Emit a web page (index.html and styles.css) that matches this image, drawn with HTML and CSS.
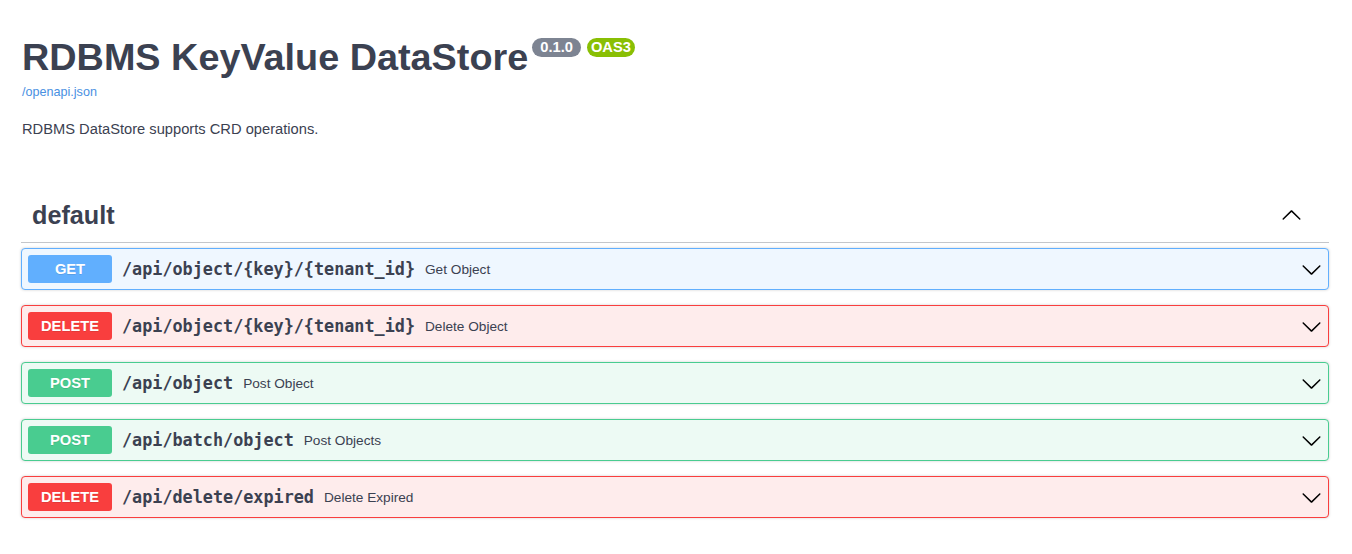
FILE: index.html
```html
<!DOCTYPE html>
<html lang="en">
<head>
<meta charset="utf-8">
<title>RDBMS KeyValue DataStore</title>
<link rel="stylesheet" href="styles.css">
</head>
<body>
<div class="wrapper">
  <div class="info">
    <h2 class="title">
      <span class="title-text">RDBMS KeyValue DataStore</span>
      <span class="badges">
        <span class="badge badge-version">0.1.0</span>
        <span class="badge badge-oas">OAS3</span>
      </span>
    </h2>
    <a class="spec-link" href="#">/openapi.json</a>
    <p class="description">RDBMS DataStore supports CRD operations.</p>
  </div>

  <div class="tag-section">
    <h3 class="tag">
      <span class="tag-name">default</span>
      <svg class="arrow arrow-up" viewBox="0 0 20 20" width="21" height="21" aria-hidden="true"><path d="M17.418 6.109c.272-.268.709-.268.979 0s.271.701 0 .969l-7.908 7.83c-.27.268-.707.268-.979 0l-7.908-7.83c-.27-.268-.27-.701 0-.969.271-.268.709-.268.979 0L10 13.25l7.418-7.141z" transform="rotate(180 10 10)"/></svg>
    </h3>

    <div class="opblock op-get">
      <span class="method">GET</span>
      <span class="path">/api/object/{key}/{tenant_id}</span>
      <span class="summary">Get Object</span>
      <svg class="arrow" viewBox="0 0 20 20" width="21" height="21" aria-hidden="true"><path d="M17.418 6.109c.272-.268.709-.268.979 0s.271.701 0 .969l-7.908 7.83c-.27.268-.707.268-.979 0l-7.908-7.83c-.27-.268-.27-.701 0-.969.271-.268.709-.268.979 0L10 13.25l7.418-7.141z"/></svg>
    </div>

    <div class="opblock op-delete">
      <span class="method">DELETE</span>
      <span class="path">/api/object/{key}/{tenant_id}</span>
      <span class="summary">Delete Object</span>
      <svg class="arrow" viewBox="0 0 20 20" width="21" height="21" aria-hidden="true"><path d="M17.418 6.109c.272-.268.709-.268.979 0s.271.701 0 .969l-7.908 7.83c-.27.268-.707.268-.979 0l-7.908-7.83c-.27-.268-.27-.701 0-.969.271-.268.709-.268.979 0L10 13.25l7.418-7.141z"/></svg>
    </div>

    <div class="opblock op-post">
      <span class="method">POST</span>
      <span class="path">/api/object</span>
      <span class="summary">Post Object</span>
      <svg class="arrow" viewBox="0 0 20 20" width="21" height="21" aria-hidden="true"><path d="M17.418 6.109c.272-.268.709-.268.979 0s.271.701 0 .969l-7.908 7.83c-.27.268-.707.268-.979 0l-7.908-7.83c-.27-.268-.27-.701 0-.969.271-.268.709-.268.979 0L10 13.25l7.418-7.141z"/></svg>
    </div>

    <div class="opblock op-post">
      <span class="method">POST</span>
      <span class="path">/api/batch/object</span>
      <span class="summary">Post Objects</span>
      <svg class="arrow" viewBox="0 0 20 20" width="21" height="21" aria-hidden="true"><path d="M17.418 6.109c.272-.268.709-.268.979 0s.271.701 0 .969l-7.908 7.83c-.27.268-.707.268-.979 0l-7.908-7.83c-.27-.268-.27-.701 0-.969.271-.268.709-.268.979 0L10 13.25l7.418-7.141z"/></svg>
    </div>

    <div class="opblock op-delete">
      <span class="method">DELETE</span>
      <span class="path">/api/delete/expired</span>
      <span class="summary">Delete Expired</span>
      <svg class="arrow" viewBox="0 0 20 20" width="21" height="21" aria-hidden="true"><path d="M17.418 6.109c.272-.268.709-.268.979 0s.271.701 0 .969l-7.908 7.83c-.27.268-.707.268-.979 0l-7.908-7.83c-.27-.268-.27-.701 0-.969.271-.268.709-.268.979 0L10 13.25l7.418-7.141z"/></svg>
    </div>
  </div>
</div>
</body>
</html>
```

FILE: styles.css
```css
html, body {
  margin: 0;
  padding: 0;
  background: #ffffff;
}

body {
  font-family: "Liberation Sans", Arial, sans-serif;
  color: #3b4151;
}

.wrapper {
  padding: 0 23px 0 21px;
}

.info {
  padding-top: 35px;
  padding-left: 1px;
}

.title {
  display: flex;
  align-items: flex-start;
  margin: 0;
  font-size: 37.8px;
  line-height: 44px;
  font-weight: 700;
  color: #3b4151;
}

.title-text {
  display: block;
}

.badges {
  display: flex;
  gap: 6px;
  margin-top: 3px;
  margin-left: 4px;
}

.badge {
  display: block;
  height: 19px;
  line-height: 19px;
  padding: 0 8px;
  border-radius: 57px;
  font-size: 14.7px;
  font-weight: 700;
  color: #ffffff;
}

.badge-version {
  background: #7d8492;
}

.badge-oas {
  background: #89bf04;
  padding: 0 4px;
}

.spec-link {
  display: block;
  margin-top: 6px;
  font-size: 12.6px;
  line-height: 15px;
  color: #4990e2;
  text-decoration: none;
}

.description {
  margin: 19px 0 0;
  font-size: 14.7px;
  line-height: 21px;
  color: #3b4151;
}

.tag-section {
  margin-top: 48px;
}

.tag {
  display: flex;
  align-items: center;
  justify-content: space-between;
  margin: 0 0 5px;
  padding: 13px 27px 12px 11px;
  border-bottom: 1px solid rgba(59, 65, 81, 0.3);
  font-size: 25.2px;
  line-height: 29px;
  font-weight: 700;
  color: #3b4151;
}

.arrow {
  display: block;
  flex: none;
  fill: #000000;
}

.opblock {
  display: flex;
  align-items: center;
  margin: 0 0 15px;
  padding: 6px;
  border: 1px solid;
  border-radius: 4px;
  box-shadow: 0 0 3px rgba(0, 0, 0, 0.19);
}

.opblock .arrow {
  margin-left: auto;
}

.method {
  flex: none;
  min-width: 84px;
  height: 28px;
  line-height: 28px;
  border-radius: 3px;
  text-align: center;
  font-size: 14.7px;
  font-weight: 700;
  color: #ffffff;
  text-shadow: 0 1px 0 rgba(0, 0, 0, 0.1);
}

.path {
  margin-left: 10px;
  font-family: "DejaVu Sans Mono", "Liberation Mono", monospace;
  font-size: 16.8px;
  font-weight: 700;
  color: #3b4151;
}

.summary {
  margin-left: 10px;
  font-size: 13.65px;
  color: #3b4151;
}

.op-get {
  background: #eff7ff;
  border-color: #61affe;
}

.op-get .method {
  background: #61affe;
}

.op-delete {
  background: #feecec;
  border-color: #f93e3e;
}

.op-delete .method {
  background: #f93e3e;
}

.op-post {
  background: #edfaf4;
  border-color: #49cc90;
}

.op-post .method {
  background: #49cc90;
}
```
